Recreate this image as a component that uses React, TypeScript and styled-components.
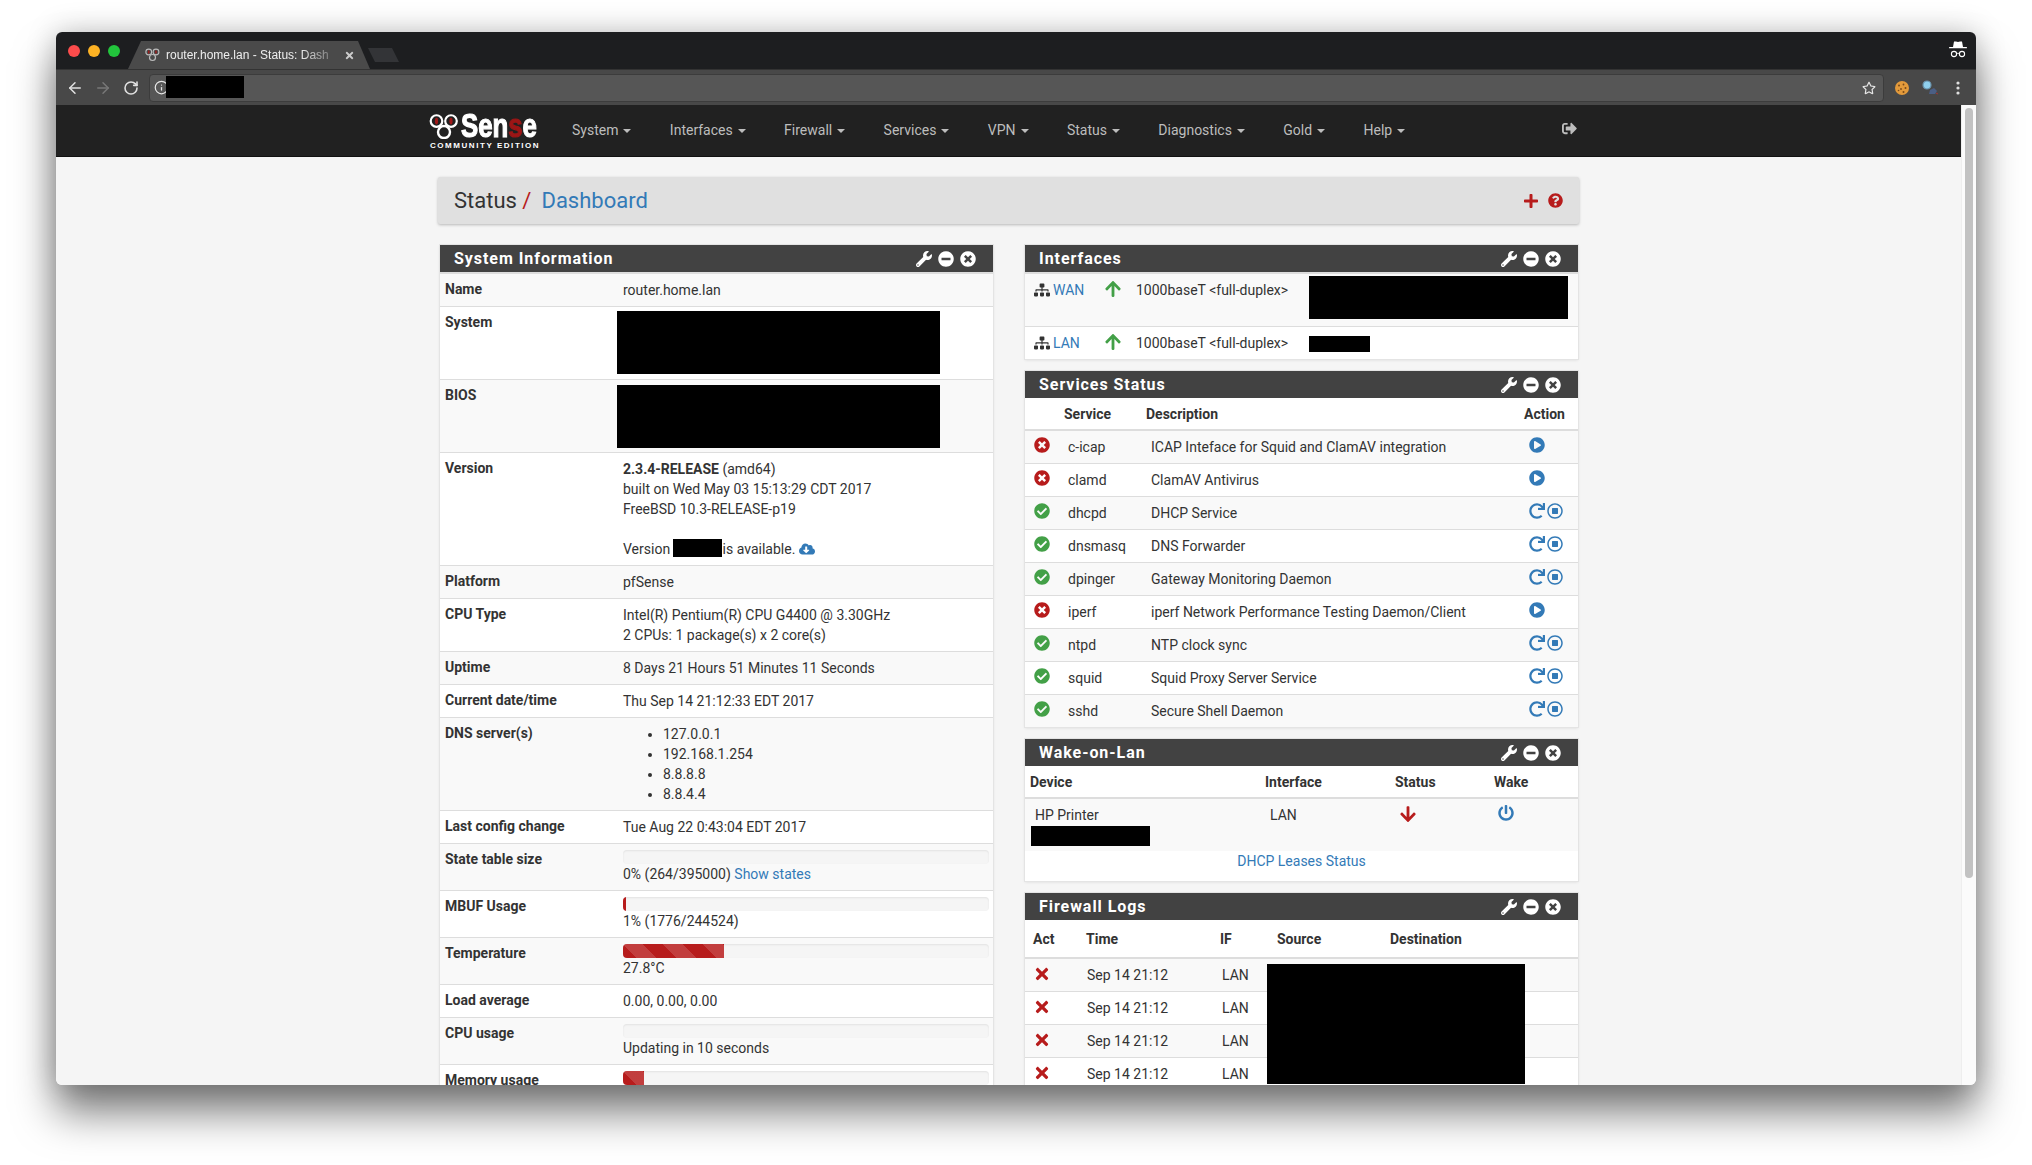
import React from "react";
import styled, { createGlobalStyle } from "styled-components";
import {
  FaWrench, FaMinusCircle, FaTimesCircle, FaPlus, FaQuestionCircle, FaSitemap, FaArrowUp, FaArrowDown,
  FaCheckCircle, FaPlayCircle, FaRegStopCircle, FaRedo, FaPowerOff, FaTimes, FaCloudDownloadAlt, FaSignOutAlt, FaRegStar,
} from "react-icons/fa";
import { ArrowLeft, ArrowRight, RotateCw, Info } from "lucide-react";

const RED = "#b71c1c";
const BLUE = "#337ab7";
const GREEN = "#43a047";

const Global = createGlobalStyle`
  html, body { margin: 0; padding: 0; background: #fff; }
  body { width: 2032px; height: 1165px; overflow: hidden; font-family: Roboto, "Liberation Sans", sans-serif; font-size: 14px; line-height: 20px; color: #333; }
  * { box-sizing: border-box; }
`;

const Win = styled.div`
  margin: 32px 0 0 56px; width: 1920px; height: 1053px; display: flex; flex-direction: column;
  border-radius: 6px; overflow: hidden; box-shadow: 0 28px 42px rgba(0,0,0,.5), 0 0 30px rgba(0,0,0,.22);
`;
const TabStrip = styled.div`
  height: 37px; background: #1d1e20; display: flex; align-items: flex-end; position: relative; flex: none;
`;
const Lights = styled.div`
  display: flex; gap: 8px; align-self: flex-start; margin: 13px 0 0 12px;
`;
const Light = styled.span<{ $c: string }>`
  width: 12px; height: 12px; border-radius: 50%; background: ${p => p.$c};
`;
const Tab = styled.div`
  margin-left: 8px; width: 242px; height: 28px; background: #4a4a4a; display: flex; align-items: center;
  padding: 0 0 0 17px; gap: 6px; color: #eee; font: 12px/16px "Liberation Sans", sans-serif;
  clip-path: polygon(0 100%, 13px 0, 230px 0, 100% 100%);
`;
const TabLabel = styled.span`
  width: 172px; white-space: nowrap; overflow: hidden;
  -webkit-mask-image: linear-gradient(90deg, #000 78%, rgba(0,0,0,.25) 97%);
  mask-image: linear-gradient(90deg, #000 78%, rgba(0,0,0,.25) 97%);
`;
const TabClose = styled.span`
  color: #ccc; display: flex; margin-left: 0;
`;
const NewTab = styled.div`
  width: 31px; height: 14px; margin: 0 0 7px -2px; background: #333437; clip-path: polygon(0 0, 24px 0, 100% 100%, 7px 100%);
`;
const Incognito = styled.span`
  position: absolute; right: 9px; top: 9px; display: flex;
`;
const Toolbar = styled.div`
  height: 36px; background: #484848; border-top: 1px solid #333; display: flex; align-items: center; flex: none; position: relative;
  padding: 0 0 0 5px;
`;
const NavBtn = styled.span<{ $c?: string }>`
  width: 28px; display: flex; justify-content: center; color: ${p => p.$c || "#e0e0e0"};
`;
const Omni = styled.div`
  margin-left: 4px; width: 1735px; height: 28px; background: #565656; border: 1px solid #3c3c3c; border-radius: 4px;
  display: flex; align-items: center; padding: 0 7px 0 4px; color: #e6e6e6; position: relative;
`;
const OmniBlack = styled.span`
  position: absolute; left: 16px; top: 1px; width: 78px; height: 22px; background: #000;
`;
const OmniSpacer = styled.span`
  flex: 1;
`;
const ExtRow = styled.div`
  display: flex; align-items: center; margin-left: 11px; gap: 13px;
`;
const MenuDots = styled.span`
  display: flex; margin-left: 5px;
`;
const Viewport = styled.div`
  flex: 1; min-height: 0; display: flex; overflow: hidden;
`;
const Page = styled.div`
  flex: 1; min-width: 0; background: #f5f5f5; overflow: hidden;
`;
const ScrollTrack = styled.div`
  width: 15px; flex: none; background: #fbfbfb; border-left: 1px solid #eee; padding: 3px 3px 0 3px;
`;
const ScrollThumb = styled.div`
  width: 8px; height: 770px; border-radius: 4px; background: #c2c2c2;
`;
const Nav = styled.nav`
  height: 52px; background: #212121; border-bottom: 1px solid #111; display: flex; align-items: center;
  padding: 0 384px 0 373px; color: #bdbdbd;
`;
const Logo = styled.div`
  width: 111px; height: 40px; margin: 3px 32px 0 0; display: flex; flex-direction: column; color: #fff; flex: none;
`;
const LogoTop = styled.div`
  display: flex; height: 28px; align-items: center; gap: 2px;
`;
const LogoWord = styled.span`
  font: 700 33px/28px "Liberation Sans", sans-serif; -webkit-text-stroke: 1.2px currentColor; display: block;
  transform: scaleX(.78); transform-origin: 0 50%; white-space: nowrap;
`;
const LogoRed = styled.span`
  color: #9c1616;
`;
const LogoSub = styled.span`
  font: 700 8px/8px "Liberation Sans", sans-serif; letter-spacing: 1.55px; margin: 2px 0 0 1px; white-space: nowrap;
`;
const Menu = styled.ul`
  list-style: none; margin: -2px 0 0; padding: 0; display: flex; gap: 38.4px; flex: 1;
`;
const MenuItem = styled.li`
  display: flex; align-items: center; gap: 5px;
  &::after { content: ""; border-top: 4px solid #bdbdbd; border-left: 4px solid transparent; border-right: 4px solid transparent; margin-top: 2px; }
`;
const Logout = styled.span`
  display: flex; color: #bdbdbd; margin-top: -4px;
`;
const Content = styled.main`
  margin-left: 382px; width: 1141px; padding-top: 20px;
`;
const TitleBar = styled.div`
  height: 47px; background: #e0e0e0; border-radius: 2px; box-shadow: 0 1px 3px rgba(0,0,0,.25);
  display: flex; align-items: center; padding: 0 16px; margin-bottom: 21px;
`;
const Crumbs = styled.h1`
  margin: 0; flex: 1; font: 400 22px/30px Roboto, sans-serif; color: #333; display: flex; gap: 4px;
`;
const Slash = styled.span`
  color: ${RED}; margin-right: 6px;
`;
const Link = styled.a`
  color: ${BLUE}; text-decoration: none;
`;
const TitleIcons = styled.div`
  display: flex; gap: 9px; color: ${RED};
`;
const Columns = styled.div`
  margin-left: 2px; display: grid; grid-template-columns: 553px 553px; column-gap: 32px; align-items: start;
`;
const Column = styled.div`
  display: flex; flex-direction: column; gap: 12px;
`;
const Panel = styled.section`
  background: #fff; box-shadow: 0 0 0 1px #e4e4e4, 0 1px 3px rgba(0,0,0,.12); position: relative;
`;
const PanelHead = styled.header`
  height: 27px; background: #424242; color: #fff; display: flex; align-items: center; padding: 0 17px 0 14px;
`;
const PanelTitle = styled.h2`
  margin: 0; flex: 1; font: 700 16px/20px Roboto, sans-serif; letter-spacing: .95px;
`;
const PanelTools = styled.div`
  display: flex; gap: 6px; font-size: 16px;
`;
const Table = styled.table`
  width: 553px; table-layout: fixed; border-collapse: separate; border-spacing: 0; position: relative;
`;
const Row = styled.tr<{ $h?: number }>`
  height: ${p => (p.$h ? `${p.$h}px` : "auto")};
  background: #fff;
  tbody &:nth-child(odd) { background: #f9f9f9; }
`;
const HeadCell = styled.th<{ $pl?: number; $big?: boolean }>`
  text-align: left; font-weight: 700; font-size: 14px; line-height: 20px; background: #fff;
  padding: ${p => (p.$big ? "9px 4px 8px" : "6px 4px 5px")};
  padding-left: ${p => p.$pl ?? 2}px;
  border-bottom: 2px solid #ddd;
  white-space: nowrap;
`;
const Cell = styled.td<{ $pl?: number; $nowrap?: boolean }>`
  padding: 6px 4px 6px ${p => p.$pl ?? 6}px; vertical-align: top; font-size: 14px; line-height: 20px;
  border-top: 1px solid #ddd; position: relative;
  white-space: ${p => (p.$nowrap ? "nowrap" : "normal")};
  tbody tr:first-child > & { border-top: 0; }
`;
const InfoTable = styled(Table)`
  border-top: 2px solid #ddd;
`;
const RowLabel = styled.th`
  text-align: left; font-weight: 700; font-size: 14px; line-height: 20px; padding: 5px 4px 7px 5px; vertical-align: top;
  border-top: 1px solid #ddd;
  tbody tr:first-child > & { border-top: 0; }
`;
const Redact = styled.div<{ $l: number; $t: number; $w: number; $h: number }>`
  position: absolute; left: ${p => p.$l}px; top: ${p => p.$t}px; width: ${p => p.$w}px; height: ${p => p.$h}px; background: #000;
`;
const InlineRedact = styled.span`
  display: inline-block; width: 49px; height: 18px; background: #000; vertical-align: -3px; margin: 0 1px 0 -1px;
`;
const Dns = styled.ul`
  margin: 0; padding-left: 40px;
`;
const Bar = styled.div`
  height: 14px; background: #f5f5f5; border-radius: 4px; overflow: hidden; box-shadow: inset 0 1px 2px rgba(0,0,0,.08);
`;
const BarFill = styled.div<{ $striped?: boolean }>`
  height: 100%; background-color: ${RED};
  ${p => p.$striped ? `background-image: linear-gradient(45deg, rgba(255,255,255,.15) 25%, transparent 25%, transparent 50%, rgba(255,255,255,.15) 50%, rgba(255,255,255,.15) 75%, transparent 75%, transparent); background-size: 40px 40px;` : ""}
`;
const Glyph = styled.span<{ $c?: string; $s?: number; $top?: number }>`
  display: inline-flex; vertical-align: top; color: ${p => p.$c || "inherit"}; font-size: ${p => p.$s || 16}px;
  margin-top: ${p => p.$top ?? 1}px;
`;
const IfName = styled.span`
  display: inline-flex; gap: 3px; align-items: flex-start; vertical-align: top;
`;
const Actions = styled.span`
  display: inline-flex; gap: 2px; vertical-align: top;
`;
const FootLink = styled.div`
  text-align: center; padding: 0 0 10px; background: #fff; height: 30px;
`;

const Tools = () => (
  <PanelTools>
    <FaWrench /><FaMinusCircle /><FaTimesCircle />
  </PanelTools>
);

const Rings = ({ w = 30, dark = false }: { w?: number; dark?: boolean }) => (
  <svg width={w} height={w * 0.87} viewBox="0 0 30 26" fill="none" style={{ flex: "none" }}>
    <circle cx="7.5" cy="8" r="5.8" stroke={dark ? "#bbb" : "#fff"} strokeWidth="2.2" />
    <circle cx="22" cy="8" r="5.8" stroke={dark ? "#bbb" : "#fff"} strokeWidth="2.2" />
    <circle cx="15" cy="19" r="6" stroke={dark ? "#bbb" : "#fff"} strokeWidth="2.4" />
    <ellipse cx="7.5" cy="8" rx="1.6" ry="3.4" fill="#a01818" />
    <ellipse cx="22" cy="8" rx="1.6" ry="3.4" fill="#a01818" />
  </svg>
);

const IncognitoIcon = () => (
  <svg width="18" height="17" viewBox="0 0 18 17" fill="none">
    <path d="M5 .5h2l2 .6 2-.6h2l1 5.5H4z" fill="#fff" />
    <rect x="0" y="6" width="18" height="1.3" rx=".6" fill="#fff" />
    <circle cx="5" cy="13" r="2.6" stroke="#fff" strokeWidth="1.1" />
    <circle cx="13" cy="13" r="2.6" stroke="#fff" strokeWidth="1.1" />
    <path d="M7.6 12.7c.9-.5 1.9-.5 2.8 0" stroke="#fff" strokeWidth="1" />
  </svg>
);

const CookieIcon = () => (
  <svg width="14" height="14" viewBox="0 0 14 14">
    <circle cx="7" cy="7" r="7" fill="#e39a3b" />
    <circle cx="4" cy="4.5" r="1" fill="#7a4a1a" /><circle cx="8.5" cy="3.5" r=".9" fill="#7a4a1a" />
    <circle cx="10.5" cy="7" r="1" fill="#7a4a1a" /><circle cx="6" cy="8" r=".9" fill="#7a4a1a" />
    <circle cx="3.5" cy="9.5" r=".8" fill="#7a4a1a" /><circle cx="8.5" cy="11" r="1" fill="#7a4a1a" />
  </svg>
);
const SnoopIcon = () => (
  <svg width="16" height="16" viewBox="0 0 16 16">
    <circle cx="5" cy="5" r="4" fill="#8fd0ee" stroke="#6a93ad" strokeWidth="1.2" />
    <path d="M8 10l4-2 3 3-2 3H7z" fill="#4b5f85" />
    <path d="M14 13l2 1" stroke="#a33" strokeWidth="1" />
  </svg>
);
const DotsIcon = () => (
  <svg width="4" height="14" viewBox="0 0 4 14" fill="#e0e0e0">
    <circle cx="2" cy="2" r="1.6" /><circle cx="2" cy="7" r="1.6" /><circle cx="2" cy="12" r="1.6" />
  </svg>
);

const menu = ["System", "Interfaces", "Firewall", "Services", "VPN", "Status", "Diagnostics", "Gold", "Help"];
const services: [string, string, boolean][] = [
  ["c-icap", "ICAP Inteface for Squid and ClamAV integration", false],
  ["clamd", "ClamAV Antivirus", false],
  ["dhcpd", "DHCP Service", true],
  ["dnsmasq", "DNS Forwarder", true],
  ["dpinger", "Gateway Monitoring Daemon", true],
  ["iperf", "iperf Network Performance Testing Daemon/Client", false],
  ["ntpd", "NTP clock sync", true],
  ["squid", "Squid Proxy Server Service", true],
  ["sshd", "Secure Shell Daemon", true],
];

export default function App() {
  return (
    <>
      <Global />
      <Win>
        <TabStrip>
          <Lights>
            <Light $c="#fc4c4c" /><Light $c="#fdb224" /><Light $c="#22c53c" />
          </Lights>
          <Tab>
            <Rings w={15} dark />
            <TabLabel>router.home.lan - Status: Dash</TabLabel>
            <TabClose><FaTimes size={11} /></TabClose>
          </Tab>
          <NewTab />
          <Incognito><IncognitoIcon /></Incognito>
        </TabStrip>
        <Toolbar>
          <NavBtn><ArrowLeft size={18} /></NavBtn>
          <NavBtn $c="#777"><ArrowRight size={18} /></NavBtn>
          <NavBtn><RotateCw size={16} strokeWidth={2.4} /></NavBtn>
          <Omni>
            <Info size={15} />
            <OmniBlack />
            <OmniSpacer />
            <FaRegStar size={14} />
          </Omni>
          <ExtRow>
            <CookieIcon /><SnoopIcon /><MenuDots><DotsIcon /></MenuDots>
          </ExtRow>
        </Toolbar>
        <Viewport>
          <Page>
            <Nav>
              <Logo>
                <LogoTop>
                  <Rings w={30} />
                  <LogoWord>Sen<LogoRed>s</LogoRed>e</LogoWord>
                </LogoTop>
                <LogoSub>COMMUNITY EDITION</LogoSub>
              </Logo>
              <Menu>
                {menu.map(m => <MenuItem key={m}>{m}</MenuItem>)}
              </Menu>
              <Logout><FaSignOutAlt size={15} /></Logout>
            </Nav>
            <Content>
              <TitleBar>
                <Crumbs>
                  <span>Status<Slash> /</Slash></span>
                  <Link>Dashboard</Link>
                </Crumbs>
                <TitleIcons><FaPlus size={16} /><FaQuestionCircle size={15} /></TitleIcons>
              </TitleBar>
              <Columns>
                <Column>
                  <Panel>
                    <PanelHead><PanelTitle>System Information</PanelTitle><Tools /></PanelHead>
                    <InfoTable>
                      <colgroup><col width={177} /><col width={376} /></colgroup>
                      <tbody>
                        <Row><RowLabel>Name</RowLabel><Cell>router.home.lan</Cell></Row>
                        <Row $h={73}><RowLabel>System</RowLabel><Cell><Redact $l={0} $t={4} $w={323} $h={63} /></Cell></Row>
                        <Row $h={73}><RowLabel>BIOS</RowLabel><Cell><Redact $l={0} $t={5} $w={323} $h={63} /></Cell></Row>
                        <Row>
                          <RowLabel>Version</RowLabel>
                          <Cell>
                            <strong>2.3.4-RELEASE</strong> (amd64)<br />
                            built on Wed May 03 15:13:29 CDT 2017<br />
                            FreeBSD 10.3-RELEASE-p19<br /><br />
                            Version <InlineRedact />is available. <Glyph $c={BLUE} $top={2}><FaCloudDownloadAlt /></Glyph>
                          </Cell>
                        </Row>
                        <Row><RowLabel>Platform</RowLabel><Cell>pfSense</Cell></Row>
                        <Row><RowLabel>CPU Type</RowLabel><Cell>Intel(R) Pentium(R) CPU G4400 @ 3.30GHz<br />2 CPUs: 1 package(s) x 2 core(s)</Cell></Row>
                        <Row><RowLabel>Uptime</RowLabel><Cell>8 Days 21 Hours 51 Minutes 11 Seconds</Cell></Row>
                        <Row><RowLabel>Current date/time</RowLabel><Cell>Thu Sep 14 21:12:33 EDT 2017</Cell></Row>
                        <Row>
                          <RowLabel>DNS server(s)</RowLabel>
                          <Cell><Dns><li>127.0.0.1</li><li>192.168.1.254</li><li>8.8.8.8</li><li>8.8.4.4</li></Dns></Cell>
                        </Row>
                        <Row><RowLabel>Last config change</RowLabel><Cell>Tue Aug 22 0:43:04 EDT 2017</Cell></Row>
                        <Row><RowLabel>State table size</RowLabel><Cell><Bar />0% (264/395000) <Link>Show states</Link></Cell></Row>
                        <Row><RowLabel>MBUF Usage</RowLabel><Cell><Bar><BarFill style={{ width: 3 }} /></Bar>1% (1776/244524)</Cell></Row>
                        <Row><RowLabel>Temperature</RowLabel><Cell><Bar><BarFill $striped style={{ width: 101 }} /></Bar>27.8°C</Cell></Row>
                        <Row><RowLabel>Load average</RowLabel><Cell>0.00, 0.00, 0.00</Cell></Row>
                        <Row><RowLabel>CPU usage</RowLabel><Cell><Bar />Updating in 10 seconds</Cell></Row>
                        <Row><RowLabel>Memory usage</RowLabel><Cell><Bar><BarFill $striped style={{ width: 21 }} /></Bar></Cell></Row>
                      </tbody>
                    </InfoTable>
                  </Panel>
                </Column>
                <Column>
                  <Panel>
                    <PanelHead><PanelTitle>Interfaces</PanelTitle><Tools /></PanelHead>
                    <InfoTable>
                      <colgroup><col width={74} /><col width={31} /><col width={173} /><col width={275} /></colgroup>
                      <tbody>
                        {[["WAN", 52, 2, 259, 43], ["LAN", 33, 9, 61, 16]].map(([name, h, t, w, bh]) => (
                          <Row key={name as string} $h={h as number}>
                            <Cell $pl={9}><IfName><Glyph $top={2}><FaSitemap /></Glyph><Link>{name}</Link></IfName></Cell>
                            <Cell $pl={5}><Glyph $c={GREEN} $s={18} $top={0}><FaArrowUp /></Glyph></Cell>
                            <Cell $nowrap>1000baseT &lt;full-duplex&gt;</Cell>
                            <Cell><Redact $l={6} $t={t as number} $w={w as number} $h={bh as number} /></Cell>
                          </Row>
                        ))}
                      </tbody>
                    </InfoTable>
                  </Panel>
                  <Panel>
                    <PanelHead><PanelTitle>Services Status</PanelTitle><Tools /></PanelHead>
                    <Table>
                      <colgroup><col width={37} /><col width={83} /><col width={378} /><col width={55} /></colgroup>
                      <thead>
                        <tr><HeadCell /><HeadCell>Service</HeadCell><HeadCell $pl={1}>Description</HeadCell><HeadCell $pl={1}>Action</HeadCell></tr>
                      </thead>
                      <tbody>
                        {services.map(([n, d, up]) => (
                          <Row key={n}>
                            <Cell $pl={9}><Glyph $c={up ? GREEN : RED} $top={0}>{up ? <FaCheckCircle /> : <FaTimesCircle />}</Glyph></Cell>
                            <Cell>{n}</Cell>
                            <Cell $nowrap>{d}</Cell>
                            <Cell>
                              <Actions>
                                {up
                                  ? <><Glyph $c={BLUE} $top={0}><FaRedo /></Glyph><Glyph $c={BLUE} $top={0}><FaRegStopCircle /></Glyph></>
                                  : <Glyph $c={BLUE} $top={0}><FaPlayCircle /></Glyph>}
                              </Actions>
                            </Cell>
                          </Row>
                        ))}
                      </tbody>
                    </Table>
                  </Panel>
                  <Panel>
                    <PanelHead><PanelTitle>Wake-on-Lan</PanelTitle><Tools /></PanelHead>
                    <Table>
                      <colgroup><col width={239} /><col width={130} /><col width={99} /><col width={85} /></colgroup>
                      <thead>
                        <tr><HeadCell $pl={5}>Device</HeadCell><HeadCell $pl={1}>Interface</HeadCell><HeadCell $pl={1}>Status</HeadCell><HeadCell $pl={1}>Wake</HeadCell></tr>
                      </thead>
                      <tbody>
                        <Row $h={52}>
                          <Cell $pl={10}>HP Printer<Redact $l={6} $t={27} $w={119} $h={20} /></Cell>
                          <Cell>LAN</Cell>
                          <Cell $pl={5}><Glyph $c={RED} $s={18} $top={0}><FaArrowDown /></Glyph></Cell>
                          <Cell $pl={5}><Glyph $c={BLUE} $top={0}><FaPowerOff /></Glyph></Cell>
                        </Row>
                      </tbody>
                    </Table>
                    <FootLink><Link>DHCP Leases Status</Link></FootLink>
                  </Panel>
                  <Panel>
                    <PanelHead><PanelTitle>Firewall Logs</PanelTitle><Tools /></PanelHead>
                    <Table>
                      <colgroup><col width={56} /><col width={135} /><col width={56} /><col width={113} /><col width={193} /></colgroup>
                      <thead>
                        <tr>
                          <HeadCell $big $pl={8}>Act</HeadCell><HeadCell $big $pl={5}>Time</HeadCell><HeadCell $big $pl={4}>IF</HeadCell>
                          <HeadCell $big $pl={5}>Source</HeadCell><HeadCell $big $pl={5}>Destination</HeadCell>
                        </tr>
                      </thead>
                      <tbody>
                        {[0, 1, 2, 3].map(i => (
                          <Row key={i}>
                            <Cell $pl={8}><Glyph $c={RED} $s={18} $top={0}><FaTimes /></Glyph></Cell>
                            <Cell>Sep 14 21:12</Cell>
                            <Cell>LAN</Cell>
                            <Cell />
                            <Cell />
                          </Row>
                        ))}
                      </tbody>
                    </Table>
                    <Redact $l={242} $t={71} $w={258} $h={120} />
                  </Panel>
                </Column>
              </Columns>
            </Content>
          </Page>
          <ScrollTrack><ScrollThumb /></ScrollTrack>
        </Viewport>
      </Win>
    </>
  );
}
